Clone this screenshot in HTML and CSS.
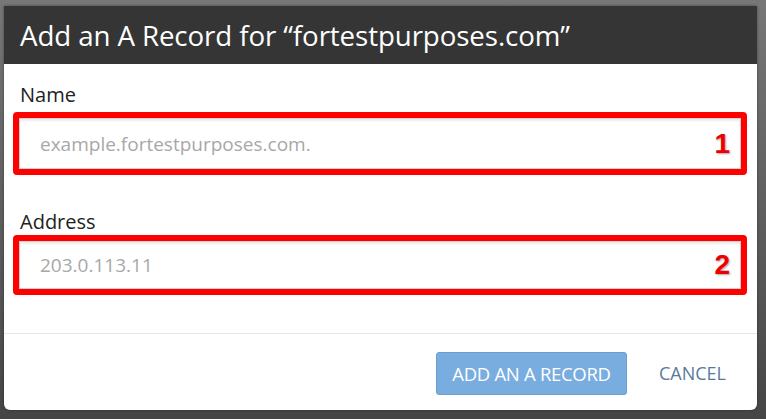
FILE: index.html
```html
<!DOCTYPE html>
<html lang="en">
<head>
  <meta charset="UTF-8">
  <title>Add an A Record</title>
  <link rel="stylesheet" href="styles.css">
</head>
<body>
  <div class="modal">
    <header class="modal-header">
      <h1>Add an A Record for “fortestpurposes.com”</h1>
    </header>

    <div class="modal-body">
      <!-- Name field -->
      <label class="field-label field-label-name" for="recordName">Name</label>
      <div class="callout">
        <input type="text" id="recordName" placeholder="example.fortestpurposes.com.">
        <span class="callout-num">1</span>
      </div>

      <!-- Address field -->
      <label class="field-label field-label-address" for="recordAddress">Address</label>
      <div class="callout callout-address">
        <input type="text" id="recordAddress" placeholder="203.0.113.11">
        <span class="callout-num">2</span>
      </div>
    </div>

    <footer class="modal-footer">
      <button class="btn-primary">ADD AN A RECORD</button>
      <button class="btn-link">CANCEL</button>
    </footer>
  </div>
</body>
</html>
```

FILE: styles.css
```css
body {
  margin: 0;
  padding: 6px 9px 9px 4px;
  background: linear-gradient(#777777, #5a5a5a 60%, #454545);
  font-family: "Open Sans", Arial, sans-serif;
  height: 419px;
  box-sizing: border-box;
}

.modal {
  width: 753px;
  height: 404px;
  background-color: white;
  border-radius: 0 0 6px 6px;
  display: flex;
  flex-direction: column;
  box-shadow: 0 0 3px rgba(0, 0, 0, 0.4);
}

.modal-header {
  background-color: #353535;
  height: 58px;
  padding-left: 16px;
  display: flex;
  align-items: center;
}

.modal-header h1 {
  margin: 0;
  color: white;
  font-size: 27.7px;
  font-weight: normal;
  line-height: 34px;
  letter-spacing: -0.1px;
}

.modal-body {
  box-sizing: border-box;
  padding: 18px 10px 0 9px;
  height: 270px;
  border-bottom: 1px solid #e6e6e6;
}

.field-label {
  display: block;
  margin-left: 7px;
  font-size: 20px;
  line-height: 26px;
  color: #222;
}

.field-label-name {
  margin-bottom: 4px;
}

.field-label-address {
  margin-top: 34px;
  margin-bottom: 0;
}

.callout {
  position: relative;
  border: 6px solid #ff0000;
  border-radius: 4px;
  height: 51px;
}

.callout-address {
  height: 48px;
}

.callout input {
  width: 100%;
  height: 100%;
  box-sizing: border-box;
  border: 1px solid #d0d0d0;
  box-shadow: inset 0 2px 2px rgba(0, 0, 0, 0.08);
  padding: 0 0 0 20px;
  font-family: "Open Sans", Arial, sans-serif;
  font-size: 19px;
  outline: none;
}

.callout input::placeholder {
  color: #a8a8a8;
}

.callout-num {
  position: absolute;
  right: 11px;
  top: 50%;
  transform: translateY(-50%);
  font-family: "Liberation Sans", Arial, sans-serif;
  font-weight: bold;
  font-size: 28px;
  color: #ee0000;
  -webkit-text-stroke: 1px white;
  paint-order: stroke fill;
  text-shadow: 1px 1px 2px rgba(0, 0, 0, 0.35);
}

.modal-footer {
  flex: 1;
  display: flex;
  align-items: center;
  justify-content: flex-end;
  padding: 2px 31px 0 0;
}

.btn-primary {
  width: 191px;
  height: 43px;
  background-color: #79ade0;
  border: 1px solid #6b9ed0;
  border-radius: 3px;
  color: white;
  font-family: "Open Sans", Arial, sans-serif;
  font-size: 18.5px;
  letter-spacing: -0.3px;
  cursor: pointer;
}

.btn-link {
  margin-left: 32px;
  padding: 0;
  background: none;
  border: none;
  color: #587a99;
  font-family: "Open Sans", Arial, sans-serif;
  font-size: 18px;
  cursor: pointer;
}
```
